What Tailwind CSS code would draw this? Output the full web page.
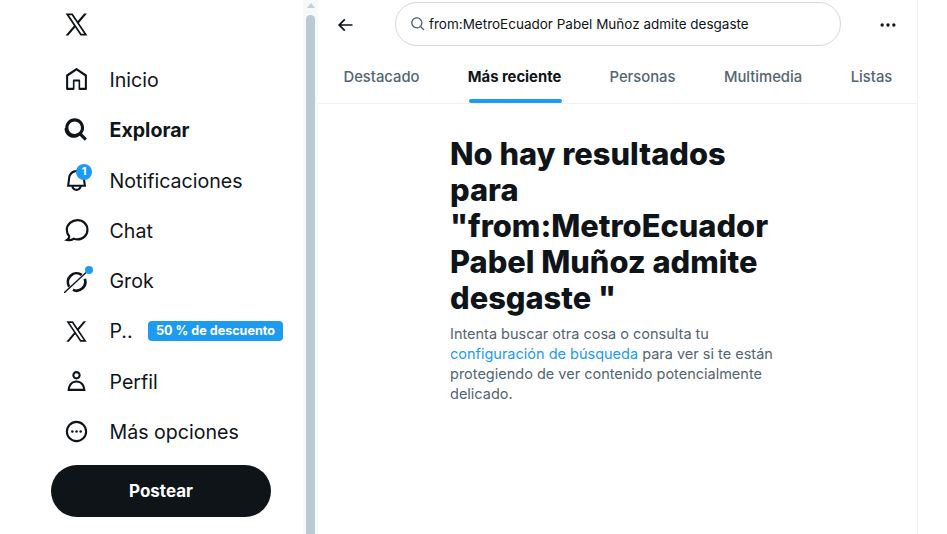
<!DOCTYPE html>
<html lang="es">
<head>
    <meta charset="UTF-8">
    <title>Buscar</title>
    <script src="https://cdn.jsdelivr.net/npm/@tailwindcss/browser@4"></script>
</head>
<body class="bg-white h-[534px] w-[947px] overflow-hidden font-['Inter',sans-serif] text-[#0f1419]">
    <div class="flex h-full">
        <!-- Sidebar -->
        <div class="w-[303px] shrink-0 h-full pl-[64px]">
            <div class="h-[54.5px] flex items-start pt-[11px]">
                <svg viewBox="0 0 24 24" class="w-[27px] h-[27px] -ml-[1px]" fill="currentColor"><path d="M21.742 21.75l-7.563-11.179 7.056-8.321h-2.456l-5.691 6.714-4.54-6.714H2.359l7.29 10.776L2.25 21.75h2.456l6.035-7.118 4.818 7.118h6.191-.008zM7.739 3.818L18.81 20.182h-2.447L5.29 3.818h2.447z"/></svg>
            </div>
            <nav class="flex flex-col text-[19.6px] text-[#0f1419]">
                <a class="h-[50.3px] flex items-center gap-[20.5px]">
                    <svg viewBox="0 0 24 24" class="w-[25px] h-[25px]" fill="currentColor"><path d="M21.591 7.146L12.52 1.157c-.316-.21-.724-.21-1.04 0l-9.071 5.99c-.26.173-.409.456-.409.757v13.183c0 .502.418.913.929.913H9.14c.51 0 .929-.41.929-.913v-7.075h3.909v7.075c0 .502.417.913.928.913h6.165c.511 0 .929-.41.929-.913V7.904c0-.301-.158-.584-.408-.758zM20 20l-4.5.01.011-7.097c0-.502-.418-.913-.928-.913H9.46c-.511 0-.929.41-.929.913L8.52 20H4V8.773l8.011-5.342L20 8.764z"/></svg>
                    <span class="pt-[2px]">Inicio</span>
                </a>
                <a class="h-[50.3px] flex items-center gap-[20.5px] font-bold">
                    <svg viewBox="0 0 24 24" class="w-[25px] h-[25px]" fill="currentColor"><path d="M10.25 4.25c-3.314 0-6 2.686-6 6s2.686 6 6 6c1.657 0 3.155-.67 4.243-1.757 1.087-1.088 1.757-2.586 1.757-4.243 0-3.314-2.686-6-6-6zm-9 6c0-4.971 4.029-9 9-9s9 4.029 9 9c0 2.127-.738 4.083-1.97 5.624l4.773 4.773-2.122 2.122-4.773-4.773c-1.541 1.232-3.497 1.97-5.624 1.97-4.971 0-9-4.029-9-9z"/></svg>
                    <span class="pt-[2px]">Explorar</span>
                </a>
                <a class="h-[50.3px] flex items-center gap-[20.5px]">
                    <div class="relative w-[25px] h-[25px]">
                        <svg viewBox="0 0 24 24" class="w-[25px] h-[25px]" fill="currentColor"><path d="M19.993 9.042C19.48 5.017 16.054 2 11.996 2s-7.49 3.021-7.999 7.051L2.866 18H7.1c.463 2.282 2.481 4 4.9 4s4.437-1.718 4.9-4h4.236l-1.143-8.958zM12 20c-1.306 0-2.417-.835-2.829-2h5.658c-.412 1.165-1.523 2-2.829 2zm-6.866-4l.847-6.698C6.364 6.272 8.941 4 11.996 4s5.627 2.268 6.013 5.295L18.864 16H5.134z"/></svg>
                        <div class="absolute left-[12px] -top-[4px] w-[16px] h-[16px] rounded-full bg-[#1d9bf0] text-white text-[11px] font-bold flex items-center justify-center">1</div>
                    </div>
                    <span class="pt-[2px]">Notificaciones</span>
                </a>
                <a class="h-[50.3px] flex items-center gap-[20.5px]">
                    <svg viewBox="0 0 24 24" class="w-[25px] h-[25px]" fill="none" stroke="currentColor" stroke-width="2.1"><path d="M13 2C7.500 2 2.700 6 2.700 11.300c0 2.300.8 4.400 2.200 6 .2 1.300-.5 2.800-2 3.700 2.400.5 4.900-.1 6.500-1.100 1.100.4 2.300.6 3.600.6 5.400 0 9.500-4 9.500-9.200S18.400 2 13 2z"/></svg>
                    <span class="pt-[2px]">Chat</span>
                </a>
                <a class="h-[50.3px] flex items-center gap-[20.5px]">
                    <div class="relative w-[25px] h-[25px]">
                        <svg viewBox="0 0 24 24" class="w-[25px] h-[25px]" fill="none" stroke="currentColor" stroke-width="2.6"><path d="M17 6.500A8.500 8.500 0 0 0 5 18"/><path d="M20 10.500A8.500 8.500 0 0 1 8.500 21"/><path stroke-width="1.300" d="M22 3.500L0 24"/></svg>
                        <div class="absolute left-[21px] -top-[2px] w-[8px] h-[8px] rounded-full bg-[#1d9bf0]"></div>
                    </div>
                    <span class="pt-[2px]">Grok</span>
                </a>
                <a class="h-[50.3px] flex items-center">
                    <svg viewBox="0 0 24 24" class="w-[25px] h-[25px]" fill="currentColor"><path d="M21.742 21.750l-7.563-11.179 7.056-8.321h-2.456l-5.691 6.714-4.540-6.714H2.359l7.290 10.776L2.250 21.750h2.456l6.035-7.118 4.818 7.118h6.191-.008zM7.739 3.818L18.810 20.182h-2.447L5.290 3.818h2.447z"/></svg>
                    <span class="ml-[20.5px] w-[38.5px] pt-[2px]">P..</span>
                    <span class="bg-[#1d9bf0] text-white text-[12.6px] font-bold rounded-[4px] h-[20px] w-[135px] flex items-center justify-center">50 % de descuento</span>
                </a>
                <a class="h-[50.3px] flex items-center gap-[20.5px]">
                    <svg viewBox="0 0 24 24" class="w-[25px] h-[25px]" fill="currentColor"><path d="M5.651 19h12.698c-.337-1.800-1.023-3.210-1.945-4.190C15.318 13.650 13.838 13 12 13s-3.317.650-4.404 1.810c-.922.980-1.608 2.390-1.945 4.190zm.486-5.560C7.627 11.850 9.648 11 12 11s4.373.850 5.863 2.440c1.477 1.580 2.366 3.800 2.632 6.460l.110 1.100H3.395l.110-1.100c.266-2.660 1.155-4.880 2.632-6.460zM12 4c-1.105 0-2 .900-2 2s.895 2 2 2 2-.900 2-2-.895-2-2-2zM8 6c0-2.210 1.791-4 4-4s4 1.790 4 4-1.791 4-4 4-4-1.790-4-4z"/></svg>
                    <span class="pt-[2px]">Perfil</span>
                </a>
                <a class="h-[50.3px] flex items-center gap-[20.5px]">
                    <svg viewBox="0 0 24 24" class="w-[25px] h-[25px]" fill="currentColor"><path d="M12 1.750a10.250 10.250 0 1 0 0 20.500 10.250 10.250 0 0 0 0-20.500zm0 2a8.250 8.250 0 1 1 0 16.500 8.250 8.250 0 0 1 0-16.500z"/><circle cx="8" cy="12" r="1.200"/><circle cx="12" cy="12" r="1.200"/><circle cx="16" cy="12" r="1.200"/></svg>
                    <span class="pt-[2px]">Más opciones</span>
                </a>
            </nav>
            <button class="mt-[8px] -ml-[13px] w-[220px] h-[52px] pt-[2px] rounded-full bg-[#0f1419] text-white text-[17px] font-bold">Postear</button>
        </div>

        <!-- Scrollbar -->
        <div class="w-[15px] shrink-0 h-full bg-[#f7f9f9] pl-[3px]">
            <div class="h-[15px] flex items-center justify-center w-[9px] pb-[4px]">
                <div class="w-0 h-0 border-x-[4px] border-x-transparent border-b-[5px] border-b-[#c3d0d8]"></div>
            </div>
            <div class="w-[9px] h-[519px] rounded-t-full bg-[#b9cad5]"></div>
        </div>

        <!-- Main column -->
        <main class="w-[600px] shrink-0 h-full border-r border-[#eff3f4]">
            <div class="h-[49px] flex items-center">
                <svg viewBox="0 0 24 24" class="w-[20px] h-[20px] ml-[17px]" fill="currentColor"><path d="M7.414 13l5.043 5.040-1.414 1.420L3.586 12l7.457-7.460 1.414 1.420L7.414 11H21v2H7.414z"/></svg>
                <div class="ml-[40px] w-[446px] h-[44px] -mt-[1px] rounded-full border border-[#cfd9de] flex items-center pl-[14px]">
                    <svg viewBox="0 0 24 24" class="w-[16px] h-[16px] text-[#536471]" fill="currentColor"><path d="M10.250 3.750c-3.590 0-6.500 2.910-6.500 6.500s2.910 6.500 6.500 6.500c1.795 0 3.419-.726 4.596-1.904 1.178-1.177 1.904-2.801 1.904-4.596 0-3.590-2.910-6.500-6.500-6.500zm-8.500 6.500c0-4.694 3.806-8.500 8.500-8.500s8.500 3.806 8.500 8.500c0 1.986-.682 3.815-1.824 5.262l4.781 4.781-1.414 1.414-4.781-4.781c-1.447 1.142-3.276 1.824-5.262 1.824-4.694 0-8.500-3.806-8.500-8.500z"/></svg>
                    <span class="ml-[3px] text-[13.5px]">from:MetroEcuador Pabel Muñoz admite desgaste</span>
                </div>
                <svg viewBox="0 0 24 24" class="w-[20px] h-[20px] ml-[37px]" fill="currentColor"><circle cx="5" cy="12" r="2"/><circle cx="12" cy="12" r="2"/><circle cx="19" cy="12" r="2"/></svg>
            </div>
            <!-- Tabs -->
            <div class="flex h-[55px] pl-[1px] pt-[3px] border-b border-[#eff3f4] text-[14.8px] font-medium text-[#536471]">
                <div class="w-[125px] flex items-center justify-center">Destacado</div>
                <div class="relative w-[141px] flex items-center justify-center font-bold text-[#0f1419]">
                    Más reciente
                    <div class="absolute bottom-0 left-[25px] w-[93px] h-[4px] rounded-full bg-[#1d9bf0]"></div>
                </div>
                <div class="w-[115px] flex items-center justify-center">Personas</div>
                <div class="w-[126px] flex items-center justify-center">Multimedia</div>
                <div class="w-[91px] flex items-center justify-center">Listas</div>
            </div>
            <!-- Empty state -->
            <div class="ml-[132px] w-[336px] pt-[32px]">
                <h1 class="text-[30.8px] leading-[36px] font-extrabold">No hay resultados para "from:MetroEcuador Pabel Muñoz admite desgaste "</h1>
                <p class="mt-[8px] text-[14.5px] leading-[20px] text-[#536471]">Intenta buscar otra cosa o consulta tu <span class="text-[#1d9bf0]">configuración de búsqueda</span> para ver si te están protegiendo de ver contenido potencialmente delicado.</p>
            </div>
        </main>
    </div>
</body>
</html>
